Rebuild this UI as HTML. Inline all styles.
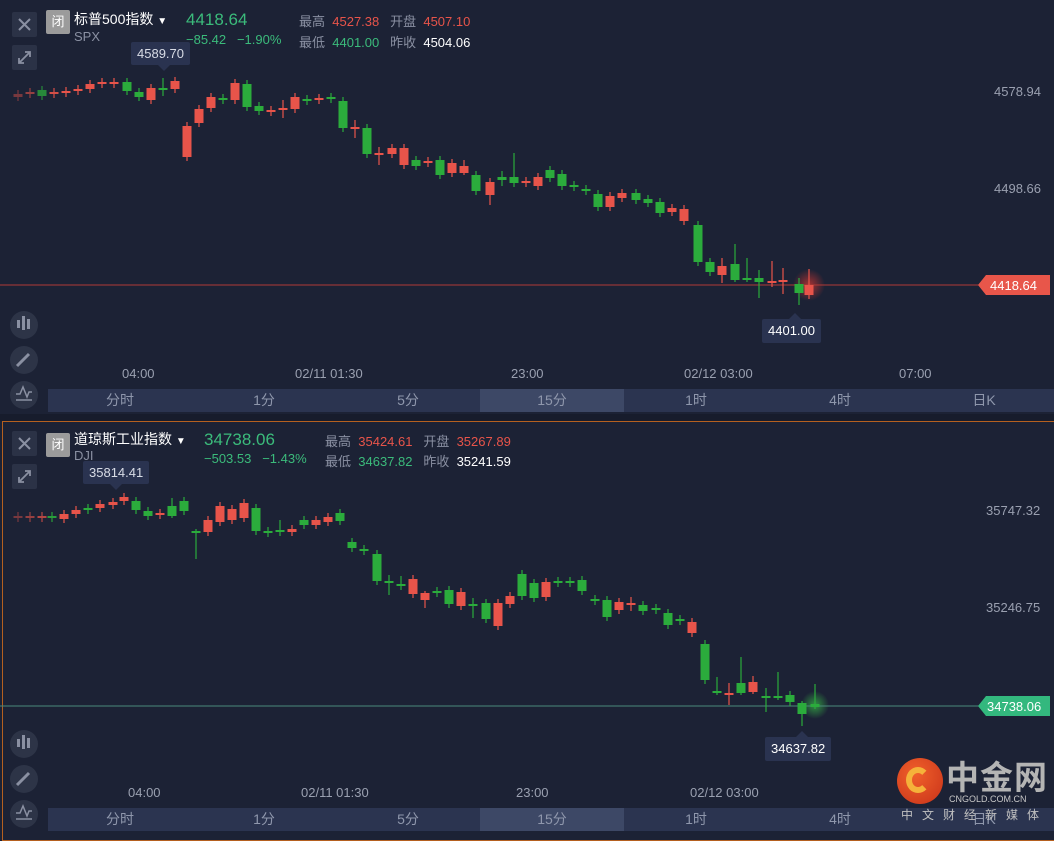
<!DOCTYPE html><html><head><meta charset="utf-8"><style>
*{margin:0;padding:0;box-sizing:border-box}
body{width:1054px;height:830px;background:#1c2235;font-family:"Liberation Sans","Noto Sans CJK SC",sans-serif;position:relative;overflow:hidden;color:#fff}
.abs{position:absolute}
.btn{position:absolute;left:12px;width:25px;height:25px;background:#2b3246;border-radius:2px}
.circ{position:absolute;left:10px;width:28px;height:28px;border-radius:50%;background:#2d3447}
.tabs{position:absolute;left:48px;width:1006px;height:23px;background:#2b3450}
.tab{position:absolute;top:0;width:144px;height:23px;line-height:23px;text-align:center;color:#8f97ac;font-size:14px}
.tab.on{background:#3d4866}
.g{color:#8a90a2}.r{color:#e8544a}.gr{color:#3bbb7b}
.lbl{position:absolute;font-size:13px}
.tip{position:absolute;background:#2a3350;color:#d8dce6;font-size:13px;padding:0 6px;height:23px;line-height:23px;border-radius:2px}
.ax{position:absolute;font-size:13px;color:#9aa0b0}
</style></head><body>

<div class="btn" style="top:12px"><svg width="25" height="25"><path d="M7 7L18 18M18 7L7 18" stroke="#8a90a2" stroke-width="2"/></svg></div>
<div class="btn" style="top:45px"><svg width="25" height="25"><path d="M7 18L18 7M13 7H18V12M7 13V18H12" stroke="#8a90a2" stroke-width="1.8" fill="none"/></svg></div>
<div class="abs" style="left:46px;top:10px;width:24px;height:24px;background:#9b9b9b;border-radius:2px;color:#fff;font-size:13px;text-align:center;line-height:24px">闭</div>
<div class="lbl" style="left:74px;top:9px;font-size:14px;color:#fff">标普500指数 <span style="font-size:10px">▼</span></div>
<div class="lbl g" style="left:74px;top:29px">SPX</div>
<div class="lbl gr" style="left:186px;top:10px;font-size:17px">4418.64</div>
<div class="lbl gr" style="left:186px;top:32px">−85.42 &nbsp;&nbsp;−1.90%</div>
<div class="lbl" style="left:299px;top:11px"><span class="g">最高</span>&nbsp;&nbsp;<span class="r">4527.38</span>&nbsp;&nbsp;&nbsp;<span class="g">开盘</span>&nbsp;&nbsp;<span class="r">4507.10</span></div>
<div class="lbl" style="left:299px;top:32px"><span class="g">最低</span>&nbsp;&nbsp;<span class="gr">4401.00</span>&nbsp;&nbsp;&nbsp;<span class="g">昨收</span>&nbsp;&nbsp;<span style="color:#fff">4504.06</span></div>
<div class="tip" style="left:131px;top:42px">4589.70</div>
<div class="ax" style="left:994px;top:84px">4578.94</div>
<div class="ax" style="left:994px;top:181px">4498.66</div>
<div class="tip" style="left:762px;top:319px;height:24px;line-height:24px;color:#fff">4401.00</div>
<div class="circ" style="top:311px"></div><div class="circ" style="top:346px"></div><div class="circ" style="top:381px"></div>
<div class="ax" style="left:122px;top:366px">04:00</div>
<div class="ax" style="left:295px;top:366px">02/11 01:30</div>
<div class="ax" style="left:511px;top:366px">23:00</div>
<div class="ax" style="left:684px;top:366px">02/12 03:00</div>
<div class="ax" style="left:899px;top:366px">07:00</div>
<div class="tabs" style="top:389px">
<div class="tab" style="left:0">分时</div><div class="tab" style="left:144px">1分</div><div class="tab" style="left:288px">5分</div><div class="tab on" style="left:432px">15分</div><div class="tab" style="left:576px">1时</div><div class="tab" style="left:720px">4时</div><div class="tab" style="left:864px">日K</div></div>

<div class="abs" style="left:0;top:414px;width:1054px;height:7px;background:#171c2c"></div>
<div class="abs" style="left:2px;top:421px;width:1060px;height:420px;border:1px solid #b5601f"></div>
<div class="btn" style="top:431px"><svg width="25" height="25"><path d="M7 7L18 18M18 7L7 18" stroke="#8a90a2" stroke-width="2"/></svg></div>
<div class="btn" style="top:464px"><svg width="25" height="25"><path d="M7 18L18 7M13 7H18V12M7 13V18H12" stroke="#8a90a2" stroke-width="1.8" fill="none"/></svg></div>
<div class="abs" style="left:46px;top:433px;width:24px;height:24px;background:#9b9b9b;border-radius:2px;color:#fff;font-size:13px;text-align:center;line-height:24px">闭</div>
<div class="lbl" style="left:74px;top:429px;font-size:14px;color:#fff">道琼斯工业指数 <span style="font-size:10px">▼</span></div>
<div class="lbl g" style="left:74px;top:448px">DJI</div>
<div class="lbl gr" style="left:204px;top:430px;font-size:17px">34738.06</div>
<div class="lbl gr" style="left:204px;top:451px">−503.53 &nbsp;&nbsp;−1.43%</div>
<div class="lbl" style="left:325px;top:431px"><span class="g">最高</span>&nbsp;&nbsp;<span class="r">35424.61</span>&nbsp;&nbsp;&nbsp;<span class="g">开盘</span>&nbsp;&nbsp;<span class="r">35267.89</span></div>
<div class="lbl" style="left:325px;top:451px"><span class="g">最低</span>&nbsp;&nbsp;<span class="gr">34637.82</span>&nbsp;&nbsp;&nbsp;<span class="g">昨收</span>&nbsp;&nbsp;<span style="color:#fff">35241.59</span></div>
<div class="tip" style="left:83px;top:461px">35814.41</div>
<div class="ax" style="left:986px;top:503px">35747.32</div>
<div class="ax" style="left:986px;top:600px">35246.75</div>
<div class="tip" style="left:765px;top:737px;height:24px;line-height:24px;color:#fff">34637.82</div>
<div class="circ" style="top:730px"></div><div class="circ" style="top:765px"></div><div class="circ" style="top:800px"></div>
<div class="ax" style="left:128px;top:785px">04:00</div>
<div class="ax" style="left:301px;top:785px">02/11 01:30</div>
<div class="ax" style="left:516px;top:785px">23:00</div>
<div class="ax" style="left:690px;top:785px">02/12 03:00</div>
<div class="tabs" style="top:808px">
<div class="tab" style="left:0">分时</div><div class="tab" style="left:144px">1分</div><div class="tab" style="left:288px">5分</div><div class="tab on" style="left:432px">15分</div><div class="tab" style="left:576px">1时</div><div class="tab" style="left:720px">4时</div><div class="tab" style="left:864px">日K</div></div>

<svg class="abs" style="left:0;top:0;pointer-events:none" width="1054" height="830" id="s"></svg>

<div class="abs" style="left:897px;top:758px;width:46px;height:46px;border-radius:50%;background:radial-gradient(circle at 40% 35%,#f0602a,#c8321a)"></div>
<div class="abs" style="left:906px;top:767px;width:24px;height:26px;border-radius:50%;border:6px solid #f5b23a;border-right-color:transparent"></div>
<div class="abs" style="left:946px;top:756px;font-size:33px;font-weight:bold;color:#b4b4b4;letter-spacing:1px;font-family:'Noto Sans CJK SC',sans-serif;line-height:38px">中金网</div>
<div class="abs" style="left:949px;top:794px;font-size:9px;color:#c8c8c8">CNGOLD.COM.CN</div>
<div class="abs" style="left:901px;top:806px;font-size:12px;color:#c0c0c0;letter-spacing:9px">中文财经新媒体</div>

<script>
(function(){
var s=document.getElementById('s');var h='';
var R='#e8544a',G='#2bac3c';
function draw(d){d.forEach(function(c,i){var x=c[0],a=c[1],b=c[2],col=c[3];var t=Math.min(a,b),bt=Math.max(a,b);if(bt-t<2)bt=t+2;var wt=t-(c[4]||4),wb=bt+(c[5]||4);var f=col?R:G;var op=i<4?0.45+i*0.15:1;h+='<g opacity="'+op+'"><line x1="'+x+'" y1="'+wt+'" x2="'+x+'" y2="'+wb+'" stroke="'+f+'" stroke-width="1.2"/><rect x="'+(x-4.5)+'" y="'+t+'" width="9" height="'+(bt-t)+'" fill="'+f+'"/></g>';});}
var topD=[[18,94,97,1],[30,92,94,1],[42,90,96,0],[54,92,93,1],[66,91,92,1],[78,89,91,1],[90,84,89,1],[102,82,83,1],[114,82,83,1],[127,82,91,0],[139,92,97,0],[151,88,100,1],[163,88,90,0,10,6],[175,81,89,1],[187,126,157,1],[199,109,123,1],[211,97,108,1],[223,98,100,0],[235,83,100,1],[247,84,107,0],[259,106,111,0],[271,110,111,1],[283,108,109,1,8,8],[295,97,109,1],[307,99,101,0],[319,98,99,1],[331,97,99,0],[343,101,128,0],[355,127,129,1,7,9],[367,128,154,0],[379,153,155,1,6,10],[392,148,154,1],[404,148,165,1],[416,160,166,0],[428,161,163,1],[440,160,175,0],[452,163,173,1],[464,166,173,1,6,2],[476,175,191,0],[490,182,195,1,4,10],[502,177,180,0,6,6],[514,177,183,0,24,4],[526,181,183,1],[538,177,186,1],[550,170,178,0],[562,174,186,0],[574,185,187,0],[586,189,191,0],[598,194,207,0],[610,196,207,1],[622,193,198,1],[636,193,200,0],[648,199,203,0],[660,202,213,0],[672,208,212,1],[684,209,221,1],[698,225,262,0],[710,262,272,0],[722,266,275,1,8,8],[735,264,280,0,20,2],[747,278,280,0,20,2],[759,278,282,0,8,16],[772,281,283,1,20,4],[783,280,282,1,12,12],[799,284,293,0,6,12],[809,285,295,1,16,0]];
var botD=[[18,516,517,1],[30,516,517,1],[42,516,517,1],[52,516,518,0],[64,514,519,1],[76,510,514,1],[88,508,509,0],[100,504,508,1],[113,502,505,1],[124,497,501,1],[136,501,510,0],[148,511,516,0],[160,513,515,1],[172,506,516,0,8,2],[184,501,511,0],[196,531,533,0,2,26],[208,520,532,1],[220,506,522,1],[232,509,520,1],[244,503,518,1],[256,508,531,0],[268,531,533,0],[280,530,532,0,10,4],[292,529,532,1],[304,520,525,0],[316,520,525,1],[328,517,522,1],[340,513,521,0],[352,542,548,0],[364,549,551,0],[377,554,581,0],[389,581,583,0,6,12],[401,584,586,0,8,4],[413,579,594,1],[425,593,600,1,2,8],[437,591,593,0],[449,590,604,0],[461,592,606,1],[473,604,606,0,6,12],[486,603,619,0],[498,603,626,1],[510,596,604,1],[522,574,596,0],[534,583,598,0],[546,582,597,1],[558,581,583,0],[570,581,583,0],[582,580,591,0],[595,599,601,0],[607,600,617,0],[619,602,610,1],[631,603,605,1,6,6],[643,605,611,0],[656,608,610,0],[668,613,625,0],[680,619,621,0],[692,622,633,1],[705,644,680,0],[717,691,693,0,14,2],[729,693,694,1,10,10],[741,683,693,0,26,2],[753,682,692,1,6,2],[766,696,697,0,8,14],[778,696,698,0,24,2],[790,695,702,0],[802,703,714,0,2,12],[815,704,707,0,20,2]];
h+='<defs><radialGradient id="gr"><stop offset="0" stop-color="#ff3b30" stop-opacity=".6"/><stop offset="1" stop-color="#ff3b30" stop-opacity="0"/></radialGradient><radialGradient id="gg"><stop offset="0" stop-color="#3de04a" stop-opacity=".6"/><stop offset="1" stop-color="#3de04a" stop-opacity="0"/></radialGradient></defs>';
h+='<circle cx="809" cy="285" r="16" fill="url(#gr)"/><circle cx="815" cy="705" r="14" fill="url(#gg)"/>';
h+='<line x1="0" y1="285" x2="980" y2="285" stroke="#b03a36" stroke-width="1"/><line x1="0" y1="706" x2="980" y2="706" stroke="#4a8a7a" stroke-width="1"/>';
draw(topD);draw(botD);
h+='<path d="M978 285L986 275H1050V295H986Z" fill="#e8564a"/><text x="990" y="290" fill="#fff" font-size="13" font-family="Liberation Sans">4418.64</text>';
h+='<path d="M978 706L986 696H1050V716H986Z" fill="#33b87e"/><text x="987" y="711" fill="#fff" font-size="13" font-family="Liberation Sans">34738.06</text>';
h+='<path d="M158 65L164 71L170 65Z" fill="#2a3350"/><path d="M110 484L116 490L122 484Z" fill="#2a3350"/><path d="M789 319L795 313L801 319Z" fill="#2a3350"/><path d="M796 737L802 731L808 737Z" fill="#2a3350"/>';
[325,744].forEach(function(y){h+='<rect x="17" y="'+(y-5)+'" width="3" height="8" fill="#8a90a2"/><rect x="22" y="'+(y-9)+'" width="3" height="14" fill="#8a90a2"/><rect x="27" y="'+(y-6)+'" width="3" height="10" fill="#8a90a2"/>';});
[359,778].forEach(function(y){h+='<path d="M17 '+(y+7)+'L29 '+(y-5)+'" stroke="#8a90a2" stroke-width="3"/>';});
[394,813].forEach(function(y){h+='<path d="M16 '+y+'H20L23 '+(y-7)+'L27 '+(y+3)+'L29 '+(y-2)+'H32M16 '+(y+6)+'H32" stroke="#8a90a2" stroke-width="1.5" fill="none"/>';});
s.innerHTML=h;
})();
</script>
</body></html>
